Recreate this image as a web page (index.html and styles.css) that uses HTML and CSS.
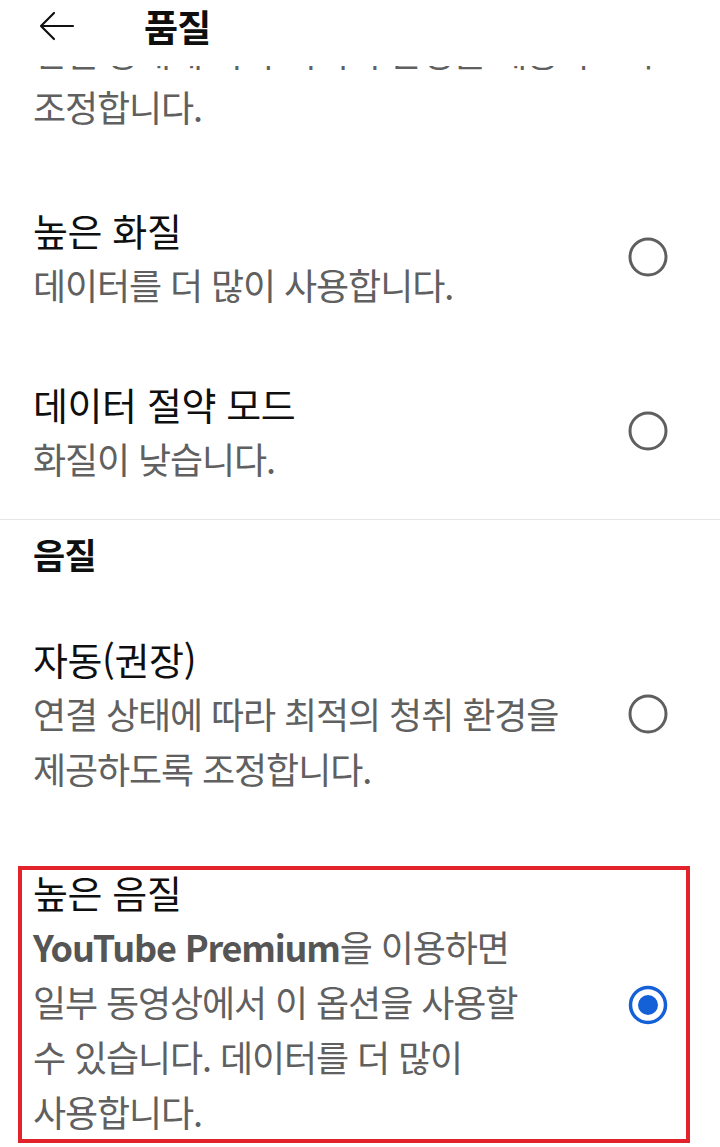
FILE: index.html
```html
<!DOCTYPE html>
<html lang="ko">
<head>
  <meta charset="UTF-8" />
  <meta name="viewport" content="width=device-width, initial-scale=1.0" />
  <title>품질</title>
  <link rel="stylesheet" href="styles.css">
</head>
<body>
  <header class="topbar">
    <svg class="back" width="40" height="30" viewBox="0 0 40 30" aria-label="뒤로">
      <path d="M36 15H4M17 2L4 15l13 13" fill="none" stroke="#111" stroke-width="2.2" stroke-linecap="round" stroke-linejoin="round"/>
    </svg>
    <h1>품질</h1>
  </header>

  <main class="list">
    <div class="tail">
      <p class="sub">연결 상태에 따라 최적의 환경을 제공하도록<br>조정합니다.</p>
    </div>

    <div class="option">
      <div class="text">
        <div class="title">높은 화질</div>
        <p class="sub">데이터를 더 많이 사용합니다.</p>
      </div>
      <svg class="radio" width="40" height="40" viewBox="0 0 40 40"><circle cx="20" cy="20" r="18" fill="none" stroke="#5f5f5f" stroke-width="3"/></svg>
    </div>

    <div class="option last">
      <div class="text">
        <div class="title">데이터 절약 모드</div>
        <p class="sub">화질이 낮습니다.</p>
      </div>
      <svg class="radio" width="40" height="40" viewBox="0 0 40 40"><circle cx="20" cy="20" r="18" fill="none" stroke="#5f5f5f" stroke-width="3"/></svg>
    </div>

    <div class="section">음질</div>

    <div class="option">
      <div class="text">
        <div class="title">자동(권장)</div>
        <p class="sub">연결 상태에 따라 최적의 청취 환경을<br>제공하도록 조정합니다.</p>
      </div>
      <svg class="radio" width="40" height="40" viewBox="0 0 40 40"><circle cx="20" cy="20" r="18" fill="none" stroke="#5f5f5f" stroke-width="3"/></svg>
    </div>

    <div class="option marked">
      <div class="text">
        <div class="title">높은 음질</div>
        <p class="sub"><b>YouTube Premium</b>을 이용하면<br>일부 동영상에서 이 옵션을 사용할<br>수 있습니다. 데이터를 더 많이<br>사용합니다.</p>
      </div>
      <svg class="radio" width="40" height="40" viewBox="0 0 40 40"><circle cx="20" cy="20" r="17.5" fill="none" stroke="#1460d6" stroke-width="3.5"/><circle cx="20" cy="20" r="10" fill="#1460d6"/></svg>
    </div>
  </main>
</body>
</html>
```

FILE: styles.css
```css
body {
  margin: 0;
  background: #fff;
  font-family: "Noto Sans CJK KR", "Noto Sans", sans-serif;
  color: #0f0f0f;
}

.topbar {
  height: 66px;
  display: flex;
  align-items: center;
  padding: 0 0 14px 37px;
  box-sizing: border-box;
  background: #fff;
}

.topbar h1 {
  margin: 0 0 0 67px;
  font-size: 37px;
  font-weight: 700;
  letter-spacing: -0.8px;
  line-height: 40px;
}

.list {
  overflow: hidden;
}

.tail {
  margin-top: -42px;
  padding: 0 52px 36px 33px;
}

.sub {
  margin: 0;
  font-size: 36px;
  line-height: 55px;
  letter-spacing: -1.1px;
  color: #606060;
}

.sub b {
  color: #555;
  letter-spacing: -1.2px;
}

.option {
  display: flex;
  align-items: center;
  justify-content: space-between;
  padding: 32px 52px 32px 33px;
}

.option.last {
  padding-bottom: 33px;
  border-bottom: 1px solid #e6e6e6;
}

.title {
  font-size: 38px;
  line-height: 55px;
  letter-spacing: -0.4px;
  color: #0f0f0f;
}

.radio {
  flex-shrink: 0;
}

.section {
  padding: 6px 33px 18px;
  font-size: 35px;
  font-weight: 700;
  line-height: 55px;
  letter-spacing: -0.8px;
}

.option.marked {
  margin: 38px 30px 0 18px;
  padding: 0 18px 0 11px;
  border: 4px solid #e3232c;
}

.option.marked .title {
  margin-top: -6px;
}
```
